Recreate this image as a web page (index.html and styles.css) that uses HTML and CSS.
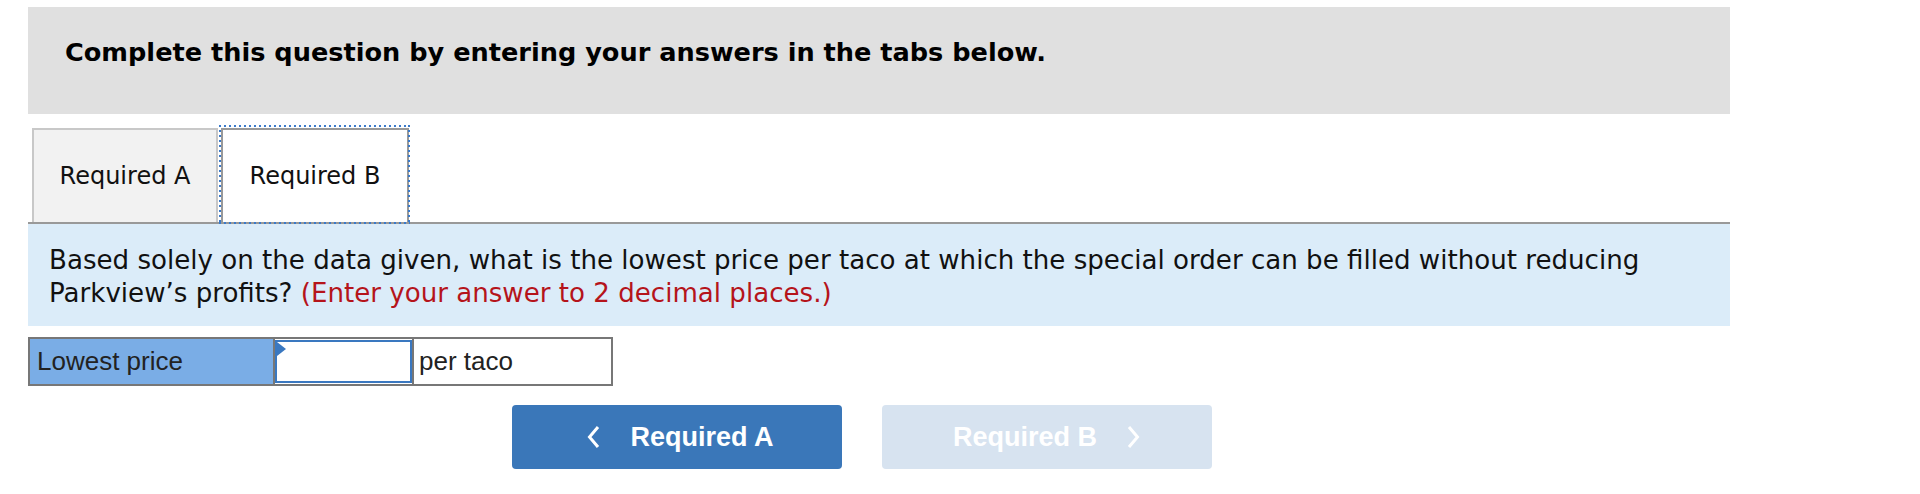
FILE: index.html
```html
<!DOCTYPE html>
<html lang="en">
<head>
  <meta charset="UTF-8" />
  <title>Required B</title>
  <link rel="stylesheet" href="styles.css">
</head>
<body>
  <div class="container">
    <div class="instructions">
      <h2>Complete this question by entering your answers in the tabs below.</h2>
    </div>

    <div class="tabs">
      <button class="tab">Required A</button>
      <button class="tab active">Required B</button>
    </div>

    <div class="question">
      Based solely on the data given, what is the lowest price per taco at which the special order can be filled without reducing
      Parkview&rsquo;s profits? <span class="hint">(Enter your answer to 2 decimal places.)</span>
    </div>

    <div class="answer">
      <div class="cell label">Lowest price</div>
      <div class="cell entry"><span class="flag"></span><input type="text"></div>
      <div class="cell unit">per taco</div>
    </div>

    <div class="nav">
      <button class="nav-btn prev">
        <svg width="14" height="24" viewBox="0 0 14 24"><path d="M12 2 L3.5 12 L12 22" fill="none" stroke="white" stroke-width="3"/></svg>
        Required A
      </button>
      <button class="nav-btn next" disabled>
        Required B
        <svg width="14" height="24" viewBox="0 0 14 24"><path d="M2 2 L10.5 12 L2 22" fill="none" stroke="white" stroke-width="3"/></svg>
      </button>
    </div>
  </div>
</body>
</html>
```
FILE: styles.css
```css
body {
  margin: 0;
  background: white;
  color: #111;
}
.container {
  width: 1702px;
  margin-left: 28px;
  padding-top: 7px;
}
.instructions {
  background: #e0e0e0;
  height: 107px;
  padding-left: 37px;
  box-sizing: border-box;
}
.instructions h2 {
  margin: 0;
  padding-top: 30px;
  font-family: "DejaVu Sans", Verdana, sans-serif;
  font-weight: bold;
  font-size: 25.6px;
  line-height: 30px;
  color: #000;
}
.tabs {
  display: flex;
  margin-top: 14px;
  padding-left: 4px;
  border-bottom: 2px solid #999;
}
.tab {
  height: 94px;
  width: 186px;
  margin-right: 3px;
  font-family: "DejaVu Sans", Verdana, sans-serif;
  font-size: 24px;
  color: #111;
  background: #f2f2f2;
  border: 2px solid #c8c8c8;
  border-bottom: none;
  padding: 0;
}
.tab.active {
  width: 188px;
  background: white;
  border-color: #999;
  position: relative;
}
/* dotted focus ring */
.tab.active::after {
  content: "";
  position: absolute;
  top: -5px;
  left: -4px;
  right: -3px;
  bottom: -2px;
  pointer-events: none;
  background:
    repeating-linear-gradient(90deg, #3b7ac9 0 2px, transparent 2px 5px) top / 100% 2px no-repeat,
    repeating-linear-gradient(90deg, #3b7ac9 0 2px, transparent 2px 5px) bottom / 100% 2px no-repeat,
    repeating-linear-gradient(180deg, #3b7ac9 0 2px, transparent 2px 5px) left / 2px 100% no-repeat,
    repeating-linear-gradient(180deg, #3b7ac9 0 2px, transparent 2px 5px) right / 2px 100% no-repeat;
}
.question {
  background: #dbecf9;
  height: 102px;
  box-sizing: border-box;
  padding: 20px 40px 0 21px;
  font-family: "DejaVu Sans", Verdana, sans-serif;
  font-size: 26.1px;
  line-height: 33px;
  color: #111;
}
.hint {
  color: #b5141b;
}
.answer {
  display: flex;
  width: 585px;
  box-sizing: border-box;
  margin-top: 11px;
  border: 2px solid #777;
  font-family: "Liberation Sans", Arial, sans-serif;
  font-size: 26px;
  color: #222;
}
.cell {
  height: 45px;
  line-height: 45px;
}
.label {
  width: 243px;
  padding-left: 7px;
  box-sizing: border-box;
  background: #7aade6;
}
.entry {
  width: 137px;
  border-left: 2px solid #777;
  border-right: 2px solid #777;
  position: relative;
}
.entry input {
  display: block;
  width: 137px;
  height: 43px;
  box-sizing: border-box;
  border: 2px solid #3a78c0;
  margin: 1px 0;
  outline: none;
}
.flag {
  position: absolute;
  left: 2px;
  top: 3px;
  width: 0;
  height: 0;
  border-top: 7px solid transparent;
  border-bottom: 7px solid transparent;
  border-left: 9px solid #3a78c0;
}
.unit {
  flex: 1;
  padding-left: 5px;
}
.nav {
  display: flex;
  gap: 40px;
  padding-left: 484px;
  margin-top: 19px;
}
.nav-btn {
  width: 330px;
  height: 64px;
  border: none;
  border-radius: 4px;
  font-family: "Liberation Sans", Arial, sans-serif;
  font-weight: bold;
  font-size: 27px;
  color: white;
  display: flex;
  align-items: center;
  justify-content: center;
  gap: 30px;
}
.prev {
  background: #3a77b9;
  padding-left: 12px;
}
.next {
  background: #d7e3f0;
}
```
